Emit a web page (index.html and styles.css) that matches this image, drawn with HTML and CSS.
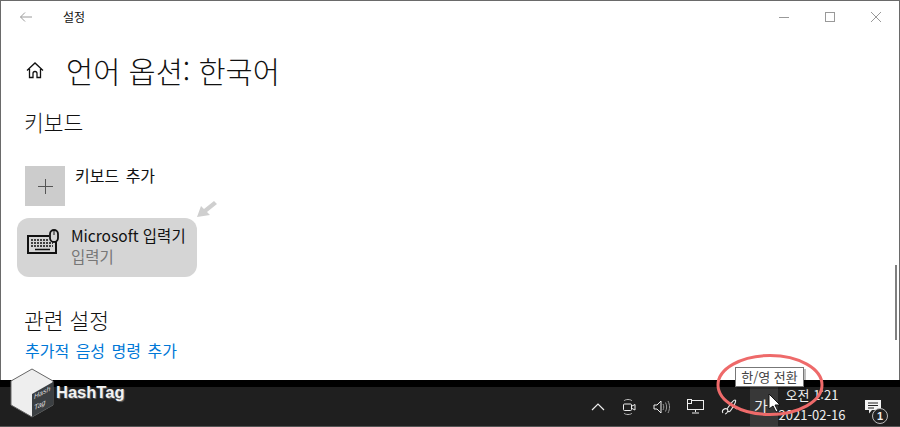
FILE: index.html
```html
<!DOCTYPE html>
<html lang="ko">
<head>
  <meta charset="UTF-8">
  <title>설정</title>
  <link rel="stylesheet" href="styles.css">
</head>
<body>
  <div class="window">
    <div class="titlebar">
      <svg class="back" width="14" height="12" viewBox="0 0 14 12"><path d="M13 6H1.500M6 1.500L1.500 6 6 10.500" fill="none" stroke="#9a9a9a" stroke-width="1"/></svg>
      <span class="app-name">설정</span>
      <div class="win-buttons">
        <svg width="10" height="10" viewBox="0 0 10 10"><path d="M0 5.500h10" stroke="#999" fill="none"/></svg>
        <svg width="10" height="10" viewBox="0 0 10 10"><rect x="0.500" y="0.500" width="9" height="9" stroke="#999" fill="none"/></svg>
        <svg width="10" height="10" viewBox="0 0 10 10"><path d="M0 0l10 10M10 0L0 10" stroke="#999" fill="none"/></svg>
      </div>
    </div>

    <div class="content">
      <div class="page-head">
        <svg class="home" width="18" height="18" viewBox="0 0 18 18"><path d="M1 9.500L9 2l8 7.500M3.500 8v8.500h3.500v-4a2 2 0 0 1 4 0v4h3.500V8" fill="none" stroke="#111" stroke-width="1.300"/></svg>
        <h1>언어 옵션: 한국어</h1>
      </div>

      <h2>키보드</h2>

      <div class="add-row">
        <div class="add-box">
          <svg width="17" height="17" viewBox="0 0 17 17"><path d="M8.500 1v15M1 8.500h15" stroke="#555" stroke-width="1" fill="none"/></svg>
        </div>
        <span class="add-label">키보드 추가</span>
      </div>

      <div class="ime-card">
        <svg class="kbd" width="34" height="26" viewBox="0 0 34 26">
          <path d="M23 7H2v17h28V13" fill="none" stroke="#111" stroke-width="2"/>
          <path d="M5 11h17M5 14h22M5 17h22" stroke="#111" stroke-width="1.500" stroke-dasharray="2 1" fill="none"/>
          <path d="M9 20.500h15" stroke="#111" stroke-width="1.500" fill="none"/>
          <rect x="24" y="1" width="8" height="12" rx="4" fill="#d5d5d5" stroke="#111" stroke-width="1.800"/>
          <path d="M28 1v5" stroke="#111" fill="none"/>
        </svg>
        <div class="ime-text">
          <div class="ime-name">Microsoft 입력기</div>
          <div class="ime-sub">입력기</div>
        </div>
      </div>

      <h2 class="related">관련 설정</h2>
      <a class="link">추가적 음성 명령 추가</a>
    </div>

    <div class="scrollbar"></div>
  </div>

  <div class="taskbar">
    <div class="tray">
      <svg width="14" height="9" viewBox="0 0 14 9"><path d="M1 8l6-6 6 6" stroke="#eee" stroke-width="1.200" fill="none"/></svg>
      <svg width="14" height="18" viewBox="0 0 14 18"><path d="M2 3c1-2 7-2 8 0M2 15c1 2 7 2 8 0" stroke="#bbb" fill="none"/><rect x="1.500" y="6" width="8" height="6.500" rx="1" stroke="#eee" fill="none"/><path d="M10 8l3-1.500v5.500L10 10.500" stroke="#eee" fill="none"/></svg>
      <svg width="17" height="16" viewBox="0 0 17 16"><path d="M1 6h3l4-4v12l-4-4H1z" stroke="#eee" fill="none"/><path d="M10 5c1 2 1 4 0 6M12.500 3.500c1.500 3 1.500 6 0 9M15 2c2 4 2 8 0 12" stroke="#999" fill="none"/></svg>
      <svg width="17" height="15" viewBox="0 0 17 15"><rect x="0.500" y="1.500" width="16" height="9" fill="none" stroke="#eee"/><rect x="0.500" y="0.500" width="4" height="4" fill="#222" stroke="#eee"/><path d="M8.500 11v2M5 14h7" stroke="#eee" fill="none"/></svg>
      <svg width="18" height="17" viewBox="0 0 18 17"><path d="M2 15c-2-3 2-5 4-4s0 5-2 5M6 11c2-3 6-9 8-9s-1 6-4 10c-1 2-3 2-3 1M11 9c2 0 4 1 5 2" stroke="#eee" stroke-width="1.100" fill="none"/></svg>
      <div class="lang">가</div>
    </div>
    <div class="clock">
      <div>오전 1:21</div>
      <div>2021-02-16</div>
    </div>
    <div class="notify">
      <svg width="16" height="14" viewBox="0 0 16 14"><path d="M0 0h16v10H7l-3 3.500V10H0z" fill="#f4f4f4"/><path d="M3 3h10M3 5.500h10M3 8h6" stroke="#222" fill="none"/></svg>
      <span class="notify-count">1</span>
    </div>
  </div>

  <!-- things pasted over the shot -->
  <svg class="hint-arrow" width="20" height="17" viewBox="0 0 20 17"><path d="M0 17l4-11 3 3 10-8 3 3-10 8 3 3z" fill="#cfcfcf"/></svg>

  <div class="logo">
    <svg width="44" height="50" viewBox="0 0 44 50">
      <path d="M22 1l21 12v24L22 49 1 37V13z" fill="#eeeeee" stroke="#666"/>
      <path d="M43 14v23L22 49V26z" fill="#3b3f42"/>
    </svg>
    <span class="logo-tag">Hash<br>Tag</span>
  </div>
  <span class="brand">HashTag</span>

  <svg class="circle" width="108" height="64" viewBox="0 0 108 64"><ellipse cx="54" cy="32" rx="52" ry="29.500" fill="none" stroke="#ee6a6a" stroke-width="3"/></svg>
  <div class="tooltip">한/영 전환</div>
  <svg class="cursor" width="14" height="20" viewBox="0 0 14 20"><path d="M1 1v15l4-3 3 6 2-1-3-6h5z" fill="#fff" stroke="#111"/></svg>
</body>
</html>
```

FILE: styles.css
```css
* {
  box-sizing: border-box;
}
html, body {
  margin: 0;
  height: 427px;
  overflow: hidden;
}
body {
  position: relative;
  background: #fff;
  font-family: "Noto Sans CJK KR", "Noto Sans", sans-serif;
  color: #111;
  display: flex;
  flex-direction: column;
}
.window {
  position: relative;
  height: 380px;
  border: 1px solid #6a6a6a;
  border-bottom: 0;
  background: #fff;
}
.titlebar {
  height: 31px;
  display: flex;
  align-items: center;
  padding-left: 18px;
}
.app-name {
  font-size: 12px;
  margin-left: 30px;
}
.win-buttons {
  margin-left: auto;
  display: flex;
  gap: 36px;
  padding-right: 18px;
}
.content {
  padding: 20px 0 0 23px;
}
.page-head {
  display: flex;
  align-items: center;
  gap: 22px;
  height: 36px;
  padding-left: 2px;
}
h1 {
  margin: 0;
  font-size: 29.500px;
  font-weight: 300;
  line-height: 36px;
}
h2 {
  margin: 20px 0 0 0;
  font-size: 21.500px;
  font-weight: 300;
  line-height: 28px;
}
.add-row {
  display: flex;
  align-items: flex-start;
  gap: 10px;
  margin: 30px 0 0 1px;
}
.add-box {
  width: 40px;
  height: 40px;
  background: #cccccc;
  display: flex;
  align-items: center;
  justify-content: center;
}
.add-label {
  font-size: 16px;
  line-height: 20px;
  margin-top: -1px;
  word-spacing: 2px;
}
.ime-card {
  width: 180px;
  height: 59px;
  margin: 12px 0 0 -7px;
  background: #d5d5d5;
  border-radius: 12px;
  display: flex;
  align-items: flex-start;
  padding: 11px 0 0 9px;
}
.kbd {
  flex: none;
}
.ime-text {
  margin: -4px 0 0 11px;
  font-size: 15.500px;
  line-height: 21px;
  white-space: nowrap;
}
.ime-sub {
  color: #777;
}
.related {
  margin-top: 29px;
}
.link {
  display: block;
  margin: 6px 0 0 1px;
  font-size: 16px;
  line-height: 20px;
  word-spacing: 2px;
  color: #0078d7;
}
.scrollbar {
  position: absolute;
  right: 2px;
  top: 264px;
  width: 2px;
  height: 75px;
  background: #808080;
}
.taskbar {
  flex: 1;
  border-top: 7px solid #000;
  border-bottom: 1px solid #555;
  background: #1f1f1f;
  display: flex;
  justify-content: flex-end;
  color: #eee;
}
.tray {
  display: flex;
  align-items: center;
  gap: 17px;
}
.lang {
  width: 28px;
  height: 39px;
  background: #383838;
  font-size: 15px;
  line-height: 38px;
  padding-left: 4px;
  margin-left: -6px;
}
.clock {
  width: 64px;
  margin: -2px 10px 0 2px;
  font-size: 13px;
  line-height: 20px;
  display: flex;
  flex-direction: column;
  align-items: center;
  white-space: nowrap;
}
.notify {
  position: relative;
  width: 46px;
  display: flex;
  align-items: flex-start;
  padding: 13px 0 0 11px;
}
.notify-count {
  position: absolute;
  left: 18px;
  top: 21px;
  width: 16px;
  height: 16px;
  border: 1px solid #bbb;
  border-radius: 50%;
  background: #222;
  font-family: "Liberation Sans", sans-serif;
  font-size: 11px;
  font-weight: bold;
  line-height: 14px;
  text-align: center;
}
.hint-arrow {
  position: absolute;
  left: 197px;
  top: 200px;
}
.logo {
  position: absolute;
  left: 10px;
  top: 368px;
  width: 44px;
  height: 50px;
}
.logo-tag {
  position: absolute;
  left: 24px;
  top: 19px;
  font-family: "Liberation Sans", sans-serif;
  font-size: 7px;
  font-style: italic;
  line-height: 11px;
  color: #ddd;
  transform: skewY(-28deg);
}
.brand {
  position: absolute;
  left: 56px;
  top: 382px;
  font-family: "Liberation Sans", sans-serif;
  font-size: 16.500px;
  font-weight: bold;
  line-height: 20px;
  color: #f2f2f2;
  text-shadow: 1px 1px 1px #666;
}
.circle {
  position: absolute;
  left: 716px;
  top: 353px;
}
.tooltip {
  position: absolute;
  left: 735px;
  top: 367px;
  width: 69px;
  height: 20px;
  background: #fff;
  border: 1px solid #777;
  font-size: 13px;
  line-height: 17px;
  text-align: center;
  color: #444;
  box-shadow: 2px 2px 0 rgba(0, 0, 0, 0.25);
}
.cursor {
  position: absolute;
  left: 768px;
  top: 393px;
}
```
